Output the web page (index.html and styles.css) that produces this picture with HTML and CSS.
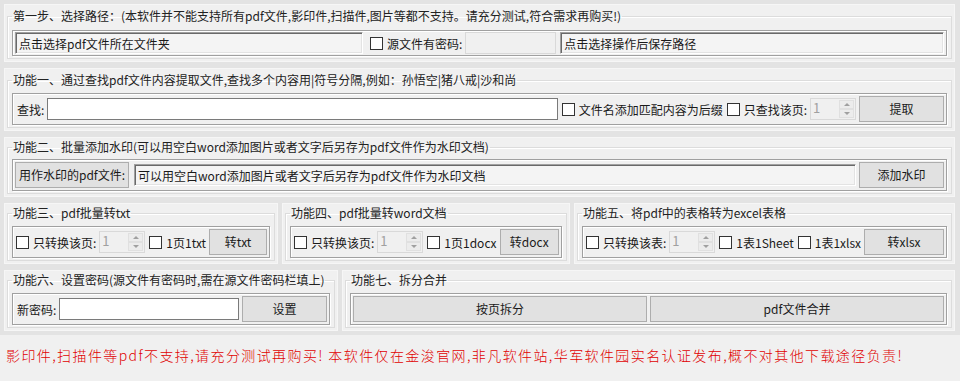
FILE: index.html
```html
<html>
    <head>
        <meta http-equiv="Content-Type" content="text/html; charset=utf-8">
        <title>pdf批量处理</title>
        <link rel="stylesheet" href="styles.css">
    </head>
    <body>
        <div class="main">
            <div class="panel p1">
                <fieldset class="group">
                    <legend>第一步、选择路径：(本软件并不能支持所有pdf文件,影印件,扫描件,图片等都不支持。请充分测试,符合需求再购买!)</legend>
                    <div class="row r1">
                        <div class="path src">点击选择pdf文件所在文件夹</div>
                        <label class="check wide"><span class="box"></span>源文件有密码:</label>
                        <div class="flat pwd"></div>
                        <div class="path out">点击选择操作后保存路径</div>
                    </div>
                </fieldset>
            </div>
            <div class="panel p2">
                <fieldset class="group">
                    <legend>功能一、通过查找pdf文件内容提取文件,查找多个内容用|符号分隔,例如：孙悟空|猪八戒|沙和尚</legend>
                    <div class="row r2">
                        <span class="lbl">查找:</span>
                        <div class="text grow"></div>
                        <label class="check"><span class="box"></span>文件名添加匹配内容为后缀</label>
                        <label class="check"><span class="box"></span>只查找该页:</label>
                        <div class="spin"><span>1</span><i class="arrows"><b class="up"></b><b class="down"></b></i></div>
                        <div class="btn w84">提取</div>
                    </div>
                </fieldset>
            </div>
            <div class="panel p3">
                <fieldset class="group">
                    <legend>功能二、批量添加水印(可以用空白word添加图片或者文字后另存为pdf文件作为水印文档)</legend>
                    <div class="row r3">
                        <div class="btn wm">用作水印的pdf文件:</div>
                        <div class="path grow">可以用空白word添加图片或者文字后另存为pdf文件作为水印文档</div>
                        <div class="btn w84">添加水印</div>
                    </div>
                </fieldset>
            </div>
            <div class="cols">
                <div class="panel p4">
                    <fieldset class="group">
                        <legend>功能三、pdf批量转txt</legend>
                        <div class="row r4">
                            <label class="check"><span class="box"></span>只转换该页:</label>
                            <div class="spin"><span>1</span><i class="arrows"><b class="up"></b><b class="down"></b></i></div>
                            <label class="check"><span class="box"></span>1页1txt</label>
                            <div class="btn grow">转txt</div>
                        </div>
                    </fieldset>
                </div>
                <div class="panel p5">
                    <fieldset class="group">
                        <legend>功能四、pdf批量转word文档</legend>
                        <div class="row r4">
                            <label class="check"><span class="box"></span>只转换该页:</label>
                            <div class="spin"><span>1</span><i class="arrows"><b class="up"></b><b class="down"></b></i></div>
                            <label class="check"><span class="box"></span>1页1docx</label>
                            <div class="btn grow">转docx</div>
                        </div>
                    </fieldset>
                </div>
                <div class="panel p6">
                    <fieldset class="group">
                        <legend>功能五、将pdf中的表格转为excel表格</legend>
                        <div class="row r4">
                            <label class="check"><span class="box"></span>只转换该表:</label>
                            <div class="spin"><span>1</span><i class="arrows"><b class="up"></b><b class="down"></b></i></div>
                            <label class="check"><span class="box"></span>1表1Sheet</label>
                            <label class="check"><span class="box"></span>1表1xlsx</label>
                            <div class="btn grow">转xlsx</div>
                        </div>
                    </fieldset>
                </div>
            </div>
            <div class="cols">
                <div class="panel p7">
                    <fieldset class="group">
                        <legend>功能六、设置密码(源文件有密码时,需在源文件密码栏填上)</legend>
                        <div class="row r5">
                            <span class="lbl">新密码:</span>
                            <div class="text grow"></div>
                            <div class="btn w84">设置</div>
                        </div>
                    </fieldset>
                </div>
                <div class="panel p8">
                    <fieldset class="group">
                        <legend>功能七、拆分合并</legend>
                        <div class="row r5">
                            <div class="btn grow">按页拆分</div>
                            <div class="btn grow">pdf文件合并</div>
                        </div>
                    </fieldset>
                </div>
            </div>
        </div>
        <div class="notice">影印件,扫描件等pdf不支持,请充分测试再购买! 本软件仅在金浚官网,非凡软件站,华军软件园实名认证发布,概不对其他下载途径负责!</div>
    </body>
</html>
```

FILE: styles.css
```css
body{
    margin: 0;
    background: #f0f0f0;
    font-family: "Noto Sans CJK SC", "Noto Sans", sans-serif;
    font-size: 12px;
    color: #1a1a1a;
}
.main{
    background: #e3e3e3;
    padding: 4px 5px 4px 4px;
    display: flex;
    flex-direction: column;
    gap: 6px;
}
.cols{
    display: flex;
    gap: 4px;
}
.panel{
    background: #f0f0f0;
    padding: 2px 3px 3px 3px;
    box-shadow: inset 0 0 0 1px #f6f6f6;
}
.p1{ padding-top: 4px; }
.p2{ padding-top: 4px; }
.p4{ width: 268px; }
.p5{ width: 282px; }
.p6{ flex: 1; }
.p7{ width: 328px; }
.p8{ flex: 1; }
.group{
    margin: 0;
    padding: 0 4px 2px 4px;
    border: 1px solid #dcdcdc;
    box-shadow: inset 1px 1px 0 #fff;
    min-width: 0;
}
.group legend{
    padding: 0 1px;
    margin-left: 0;
    line-height: 16px;
    color: #222;
}
.row{
    display: flex;
    align-items: center;
    gap: 3px;
    padding: 0 2px;
    border: 1px solid #a0a0a0;
    box-shadow: inset 1px 1px 0 #fff, 1px 1px 0 #fff;
}
.r1{ height: 24px; margin-top: 6px; }
.r2{ height: 30px; margin-top: 5px; }
.r3{ height: 30px; margin-top: 4px; }
.r4{ height: 30px; margin-top: 5px; }
.r5{ height: 30px; margin-top: 5px; }
.grow{ flex: 1; }
.lbl{
    padding: 0 0 0 2px;
    white-space: nowrap;
}
.path{
    height: 22px;
    line-height: 22px;
    padding: 0 3px;
    box-sizing: border-box;
    background: #f4f4f4;
    border-top: 1px solid #a0a0a0;
    border-left: 1px solid #a0a0a0;
    border-right: 1px solid #fff;
    border-bottom: 1px solid #fff;
    box-shadow: inset 1px 1px 0 #696969, inset -1px -1px 0 #e3e3e3;
    white-space: nowrap;
    overflow: hidden;
}
.src{ width: 348px; }
.out{ flex: 1; margin-left: 1px; }
.flat{
    height: 22px;
    box-sizing: border-box;
    border: 1px solid #d9d9d9;
    background: #f0f0f0;
}
.pwd{ width: 91px; }
.text{
    height: 22px;
    box-sizing: border-box;
    background: #fff;
    border: 1px solid #7a7a7a;
}
.check{
    display: flex;
    align-items: center;
    gap: 4px;
    white-space: nowrap;
    margin-left: 1px;
}
.wide{ margin-left: 4px; }
.box{
    width: 11px;
    height: 11px;
    background: #fff;
    border: 1px solid #333;
}
.spin{
    width: 46px;
    height: 22px;
    box-sizing: border-box;
    border: 1px solid #d9d9d9;
    background: #f0f0f0;
    display: flex;
    color: #a0a0a0;
    font-size: 13px;
}
.spin span{
    flex: 1;
    padding-left: 2px;
    line-height: 18px;
}
.arrows{
    width: 15px;
    display: flex;
    flex-direction: column;
    margin: 1px;
}
.arrows b{
    flex: 1;
    background: #ececec;
    border: 1px solid #e0e0e0;
    display: flex;
    align-items: center;
    justify-content: center;
}
.arrows b::after{
    content: "";
    border-left: 3px solid transparent;
    border-right: 3px solid transparent;
}
.up::after{ border-bottom: 3px solid #a0a0a0; }
.down::after{ border-top: 3px solid #a0a0a0; }
.btn{
    height: 26px;
    line-height: 24px;
    box-sizing: border-box;
    background: #e1e1e1;
    border: 1px solid #adadad;
    text-align: center;
    white-space: nowrap;
}
.w84{ width: 85px; }
.wm{ width: 114px; margin-right: 2px; }
.notice{
    padding: 10px 0 0 6px;
    color: #e00000;
    font-size: 14px;
    font-weight: 300;
    letter-spacing: 1.4px;
    white-space: nowrap;
}
```
